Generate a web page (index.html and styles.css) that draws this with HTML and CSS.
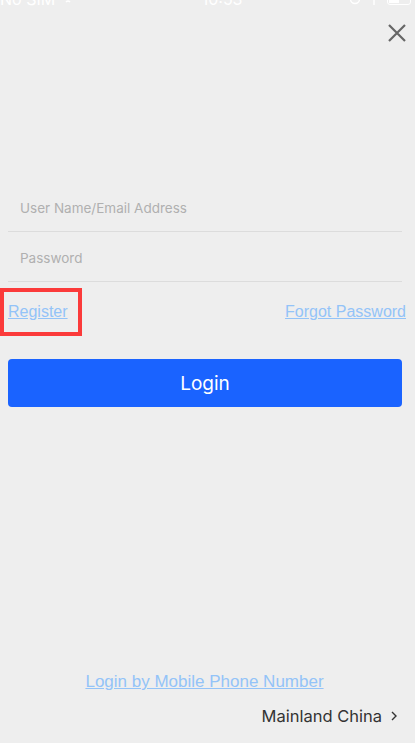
FILE: index.html
```html
<!DOCTYPE html>
<html>
<head>
<meta charset="utf-8">
<link rel="stylesheet" href="styles.css">
</head>
<body>
<div class="screen">
  <div class="status">
    <div class="status-inner">
      <span class="carrier">No SIM <svg class="wifi" width="14" height="10" viewBox="0 0 14 10"><path d="M1 3 Q7 -2 13 3 M3 5.5 Q7 2 11 5.5 M5 8 Q7 6 9 8" stroke="#fff" stroke-width="1.6" fill="none"/></svg></span>
      <span class="time">10:53</span>
      <span class="right-icons">
        <svg width="12" height="12" viewBox="0 0 12 12"><circle cx="6" cy="6" r="4.5" stroke="#fff" stroke-width="1.4" fill="none"/></svg>
        <svg width="6" height="12" viewBox="0 0 6 12"><path d="M3 0 V12" stroke="#fff" stroke-width="1.4"/></svg>
        <span class="battery"><span class="level"></span></span>
      </span>
    </div>
  </div>
  <div class="topbar">
    <button class="close" aria-label="Close">
      <svg width="18" height="18" viewBox="0 0 18 18"><path d="M1 1 L17 17 M17 1 L1 17" stroke="#666" stroke-width="2.2" fill="none"/></svg>
    </button>
  </div>
  <form class="form">
    <div class="field"><span class="placeholder">User Name/Email Address</span></div>
    <div class="field"><span class="placeholder">Password</span></div>
    <div class="links">
      <span class="highlight"><a class="link">Register</a></span>
      <a class="link">Forgot Password</a>
    </div>
    <div class="btn">Login</div>
  </form>
  <div class="spacer"></div>
  <div class="footer">
    <a class="link phone">Login by Mobile Phone Number</a>
    <div class="region">Mainland China <svg width="8" height="12" viewBox="0 0 8 12"><path d="M2 2 L6 6 L2 10" stroke="#333" stroke-width="1.4" fill="none"/></svg></div>
  </div>
</div>
</body>
</html>
```
FILE: styles.css
```css
* { box-sizing: border-box; }
*::before, *::after { box-sizing: border-box; }
html, body { margin: 0; padding: 0; }
body {
  background: #eeeeee;
  font-family: "Liberation Sans", Arial, sans-serif;
}
.screen {
  width: 415px;
  height: 743px;
  display: flex;
  flex-direction: column;
  overflow: hidden;
}
.status {
  height: 8px;
  overflow: hidden;
  color: #fff;
  font-family: "Inter", sans-serif;
  font-size: 16px;
}
.status-inner {
  margin-top: -10px;
  height: 18px;
  display: flex;
  align-items: center;
  justify-content: space-between;
  padding: 0 4px 0 0;
}
.carrier { display: flex; align-items: center; gap: 6px; }
.time { margin-left: 20px; }
.right-icons { display: flex; align-items: center; gap: 10px; }
.battery {
  width: 24px; height: 11px; border: 1.4px solid #fff; border-radius: 3px;
  display: flex; padding: 1px;
}
.level { width: 10px; background: #fff; }
.topbar {
  height: 54px;
  display: flex;
  justify-content: flex-end;
  align-items: center;
  padding-right: 9px;
  padding-bottom: 5px;
}
.close {
  border: 0; background: none; padding: 0; width: 18px; height: 18px;
  display: flex;
}
.form {
  margin-top: 120px;
  padding: 0 13px 0 8px;
  display: flex;
  flex-direction: column;
}
.field {
  height: 50px;
  border-bottom: 1px solid #dcdcdc;
  display: flex;
  align-items: center;
  padding-left: 12px;
  padding-top: 2px;
}
.placeholder {
  font-family: "Inter", "Roboto", sans-serif;
  font-size: 13.5px;
  color: #b0b0b0;
}
.links {
  display: flex;
  justify-content: space-between;
  align-items: center;
  margin-left: -8px;
  margin-right: -5px;
  height: 60px;
  padding-left: 8px;
  padding-right: 1px;
}
.link {
  color: #93c3f8;
  text-decoration: underline;
  font-size: 16px;
}
.highlight {
  position: relative;
}
.highlight::before {
  content: "";
  position: absolute;
  left: -8px;
  top: -15px;
  width: 82px;
  height: 48px;
  border: 4px solid #fb3a3a;
}
.btn {
  margin-top: 17px;
  height: 48px;
  background: #1a63ff;
  border-radius: 4px;
  color: #fff;
  font-family: "Inter", "Roboto", sans-serif;
  font-size: 19px;
  display: flex;
  align-items: center;
  justify-content: center;
}
.spacer { flex: 1; }
.footer {
  display: flex;
  flex-direction: column;
  align-items: center;
  padding-bottom: 17px;
}
.phone { font-size: 17px; margin-right: 6px; }
.region {
  align-self: flex-end;
  margin-top: 14px;
  padding-right: 17px;
  font-family: "Inter", "Roboto", sans-serif;
  font-size: 16.5px;
  color: #333;
  display: flex;
  align-items: center;
  gap: 8px;
}
```
